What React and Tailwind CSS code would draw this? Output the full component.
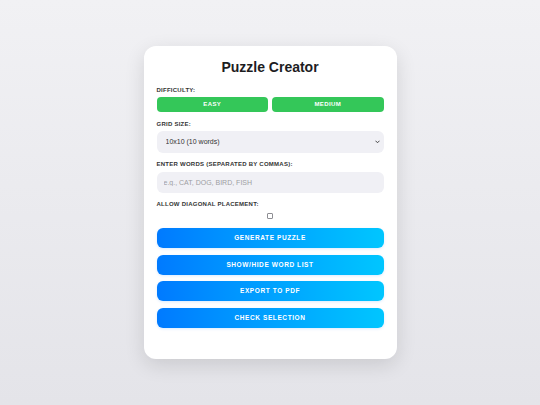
import React, { useState } from 'react';

const font = { fontFamily: '"Liberation Sans", Arial, Helvetica, sans-serif' };

const Label = ({ children }) => (
  <label className="block text-[6px] leading-[7px] font-bold uppercase tracking-[0.25px] text-[#333] mb-[3.5px]">
    {children}
  </label>
);

const ActionButton = ({ children }) => (
  <button className="w-full h-[20px] rounded-[6px] bg-gradient-to-r from-[#007aff] to-[#00c6ff] text-white text-[6.5px] font-bold uppercase tracking-[0.6px] shadow-[0_1px_3px_rgba(0,122,255,0.15)]">
    {children}
  </button>
);

const App = () => {
  const [gridSize, setGridSize] = useState('10');
  const [words, setWords] = useState('');
  const [diagonal, setDiagonal] = useState(false);

  return (
    <div
      className="min-h-screen flex items-center justify-center bg-gradient-to-b from-[#f1f1f4] to-[#e4e4e9]"
      style={font}
    >
      <div className="w-[253px] bg-white rounded-[12px] shadow-[0_6px_20px_rgba(0,0,0,0.12)] px-[13px] pt-[13px] pb-[31px]">
        {/* Title */}
        <h1 className="text-center text-[14px] leading-[16px] font-bold text-[#1d1d1f] mb-[11.5px]">
          Puzzle Creator
        </h1>

        {/* Difficulty */}
        <Label>Difficulty:</Label>
        <div className="grid grid-cols-2 gap-[4px] mb-[8.5px]">
          <button className="h-[15px] rounded-[4px] bg-[#34c759] text-white text-[6px] font-bold uppercase tracking-[0.4px]">
            Easy
          </button>
          <button className="h-[15px] rounded-[4px] bg-[#34c759] text-white text-[6px] font-bold uppercase tracking-[0.4px]">
            Medium
          </button>
        </div>

        {/* Grid size */}
        <Label>Grid Size:</Label>
        <div className="relative mb-[8.5px]">
          <select
            value={gridSize}
            onChange={(e) => setGridSize(e.target.value)}
            className="appearance-none block w-full h-[21.5px] rounded-[6px] bg-[#f0f0f5] text-[#333] text-[7px] pl-[9px] pr-[10px] outline-none"
          >
            <option value="10">10x10 (10 words)</option>
            <option value="15">15x15 (15 words)</option>
            <option value="20">20x20 (20 words)</option>
          </select>
          <svg
            className="absolute right-[4px] top-1/2 -translate-y-1/2 pointer-events-none"
            width="5"
            height="4"
            viewBox="0 0 10 8"
          >
            <path d="M1.5 2 L5 5.5 L8.5 2" fill="none" stroke="#333" strokeWidth="1.8" strokeLinecap="round" strokeLinejoin="round" />
          </svg>
        </div>

        {/* Words */}
        <Label>Enter Words (separated by commas):</Label>
        <input
          type="text"
          value={words}
          onChange={(e) => setWords(e.target.value)}
          placeholder="e.g., CAT, DOG, BIRD, FISH"
          className="block w-full h-[21.5px] rounded-[6px] bg-[#f0f0f5] text-[#333] text-[7px] px-[7px] mb-[7.5px] outline-none placeholder:text-[#9e9ea3]"
        />

        {/* Diagonal */}
        <Label>Allow Diagonal Placement:</Label>
        <div className="flex justify-center items-center h-[6px] mt-[5px] mb-[9.5px]">
          <input
            type="checkbox"
            checked={diagonal}
            onChange={(e) => setDiagonal(e.target.checked)}
            className="appearance-none shrink-0 block m-0 p-0 w-[6px] h-[6px] min-h-[6px] rounded-[1px] border border-[#8e8e93] bg-white checked:bg-[#007aff]"
          />
        </div>

        {/* Actions */}
        <div className="flex flex-col gap-[6.6px]">
          <ActionButton>Generate Puzzle</ActionButton>
          <ActionButton>Show/Hide Word List</ActionButton>
          <ActionButton>Export to PDF</ActionButton>
          <ActionButton>Check Selection</ActionButton>
        </div>
      </div>
    </div>
  );
};

export default App;
